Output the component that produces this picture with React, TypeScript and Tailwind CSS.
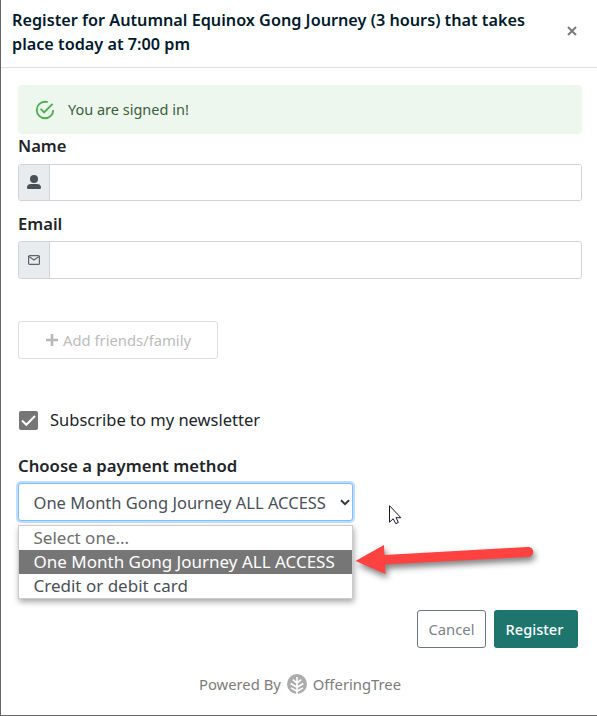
import type React from "react";

interface FieldProps {
	label: string;
	icon: React.ReactNode;
	className?: string;
	inputClassName?: string;
}

function Field({
	label,
	icon,
	className = "",
	inputClassName = "",
}: FieldProps) {
	return (
		<div className={className}>
			<label className="block h-[26px] text-[16.6px] leading-[26px] font-semibold text-[#212529]">
				{label}
			</label>
			<div
				className={`flex overflow-hidden rounded-[3px] border border-[#ced4da] ${inputClassName}`}
			>
				<span className="flex w-[31px] items-center justify-center border-r border-[#ced4da] bg-[#e9ecef] text-[#495057]">
					{icon}
				</span>
				<input className="min-w-0 flex-1 bg-white px-3 outline-none" />
			</div>
		</div>
	);
}

function SuccessIcon() {
	return (
		<svg viewBox="0 0 24 24" className="size-[22px] fill-[#4caf50]">
			<path d="M20,12A8,8 0 0,1 12,20A8,8 0 0,1 4,12A8,8 0 0,1 12,4C12.76,4 13.5,4.11 14.2,4.31L15.77,2.74C14.61,2.26 13.34,2 12,2A10,10 0 0,0 2,12A10,10 0 0,0 12,22A10,10 0 0,0 22,12M7.91,10.08L6.5,11.5L11,16L21,6L19.59,4.58L11,13.17L7.91,10.08Z" />
		</svg>
	);
}

function PersonIcon() {
	return (
		<svg viewBox="0 0 14 14" className="-mt-px h-[14px] w-[14px] fill-[#495057]">
			<circle cx="7" cy="4" r="4" />
			<path d="M0 12.500C0 10 1.700 9 4 9h6c2.300 0 4 1 4 3.500Q14 14 12.700 14H1.300Q0 14 0 12.500Z" />
		</svg>
	);
}

function MailIcon() {
	return (
		<svg
			viewBox="0 0 12 10"
			className="h-[10px] w-[12px] fill-none stroke-[#5f6468] stroke-[1.2]"
		>
			<rect x="0.6" y="0.6" width="10.800" height="8.800" rx="1" />
			<path d="M1 1.500 6 5l5-3.500" />
		</svg>
	);
}

function LeafLogo() {
	return (
		<svg viewBox="0 0 20 20" className="size-5 fill-none">
			<circle cx="10" cy="10" r="10" className="fill-[#acacac]" />
			<path
				d="M10 3v17M10 9.200 5.800 5.700M10 9.200 14.200 5.700M10 13.200 3.600 9.500M10 13.200l6.400-3.700M10 17.200l-6-3.300M10 17.200l6-3.300"
				className="stroke-white stroke-[1.600]"
			/>
		</svg>
	);
}

const options = [
	"Select one...",
	"One Month Gong Journey ALL ACCESS",
	"Credit or debit card",
];

function PaymentSelect() {
	return (
		<div className="relative mt-[4px] w-[335px]">
			<div className="flex h-[38px] items-center justify-between rounded-[3px] border border-[#80bdff] bg-white pr-[2px] pl-[14.5px] text-[16.5px] text-[#495057] shadow-[0_0_0_2px_#bfdeff]">
				<span className="pt-[2px] whitespace-nowrap">{options[1]}</span>
				<svg
					viewBox="0 0 10 7"
					className="h-[7px] w-[10px] fill-none stroke-[#343a40] stroke-2"
				>
					<path d="M1 1.200 5 5.200 9 1.200" />
				</svg>
			</div>
			<ul className="absolute top-[42px] left-0 w-full border border-[#ccc] bg-white text-[17px] leading-6 text-[#495057] shadow-[1px_3px_6px_rgba(0,0,0,0.35)]">
				{options.map((option, i) => (
					<li
						key={option}
						className={`h-6 pl-[14.5px] whitespace-nowrap ${
							i === 1 ? "bg-[#767676] text-white" : ""
						} ${i === 0 ? "text-[#6d6d6d]" : ""}`}
					>
						{option}
					</li>
				))}
			</ul>
		</div>
	);
}

function PointerArrow() {
	return (
		<svg
			viewBox="0 0 200 60"
			className="absolute top-[535px] left-[349px] h-[60px] w-[200px] drop-shadow-[2px_4px_3px_rgba(0,0,0,0.5)]"
		>
			<path
				d="M5.500 26 34 10 34.500 20 178 12A5 5 0 0 1 178.500 22L35 29.500 35.500 39Z"
				className="fill-[#fe4141]"
			/>
		</svg>
	);
}

function MouseCursor() {
	return (
		<svg
			viewBox="0 0 13 20"
			className="absolute top-[505px] left-[388px] h-[20px] w-[13px]"
		>
			<path
				d="M.5.7v16.500l3.700-3.500 2.600 5 2.600-1.200-2.400-4.800h4.900Z"
				className="fill-white stroke-[#17172b] stroke-1"
			/>
		</svg>
	);
}

export default function App() {
	return (
		<div className="relative h-[716px] w-[597px] overflow-hidden border-b border-l border-[#666] bg-white font-['Noto_Sans',sans-serif]">
			<header className="flex h-[68px] items-center justify-between border-b border-[#dee2e6] pr-5 pb-[5px] pl-[11px]">
				<h1 className="w-[530px] pt-px text-[16.23px] leading-6 font-semibold text-[#001a2c]">
					Register for Autumnal Equinox Gong Journey (3 hours) that takes
					<br />
					place today at 7:00 pm
				</h1>
				<svg
					viewBox="0 0 10 10"
					className="size-[10px] fill-none stroke-[#7b7b7b] stroke-2"
				>
					<path d="m1 1 8 8M9 1 1 9" />
				</svg>
			</header>

			<main className="px-[17px] pt-[17px]">
				<div className="mr-[-2px] w-[564px]">
					<div className="flex h-[49px] items-center gap-3 rounded-[4px] bg-[#edf7ed] pl-4 text-[14.5px] text-[#3b5e3d]">
						<SuccessIcon />
						<span>You are signed in!</span>
					</div>
					<Field
						label="Name"
						icon={<PersonIcon />}
						className="-mt-px"
						inputClassName="mt-[5px] h-[37px]"
					/>
					<Field
						label="Email"
						icon={<MailIcon />}
						className="mt-[10px]"
						inputClassName="mt-1 h-[38px]"
					/>
				</div>

				<button className="mt-[42px] flex h-[38px] w-[200px] items-center justify-center gap-[5px] rounded-[3px] border border-[#dfdfdf] pl-px text-[14.8px] text-[#bcbcbc]">
					<svg
						viewBox="0 0 12 12"
						className="size-3 fill-none stroke-[#b8b8b8] stroke-[2.600]"
					>
						<path d="M6 0v12M0 6h12" />
					</svg>
					Add friends/family
				</button>

				<label className="mt-[49px] flex h-6 items-center gap-3 pl-px text-[16.5px] text-[#212529]">
					<svg viewBox="0 0 19 19" className="size-[19px]">
						<rect width="19" height="19" rx="2" className="fill-[#767676]" />
						<path
							d="m3 9.500 4.300 4.300L16 5"
							className="fill-none stroke-white stroke-2"
						/>
					</svg>
					Subscribe to my newsletter
				</label>

				<div className="mt-[21px] h-[26px] text-[16.7px] leading-[26px] font-semibold text-[#212529]">
					Choose a payment method
				</div>
				<PaymentSelect />

				<div className="mt-[89px] flex justify-end gap-2 pr-[2px]">
					<button className="h-[38px] w-[69px] rounded-[3px] border border-[#6c757d] pt-px text-[14.8px] text-[#7a828a]">
						Cancel
					</button>
					<button className="h-[38px] w-[84px] rounded-[3px] bg-[#1d756d] pt-px pr-[3px] text-[14.6px] font-medium text-white">
						Register
					</button>
				</div>

				<footer className="mt-[25.5px] flex items-center justify-center gap-[6px] pl-[2px] text-[14.8px] leading-[22px] text-[#7c7c7c]">
					<span className="-mt-px">Powered By</span>
					<LeafLogo />
					<span className="-mt-px">OfferingTree</span>
				</footer>
			</main>

			<MouseCursor />
			<PointerArrow />
		</div>
	);
}
